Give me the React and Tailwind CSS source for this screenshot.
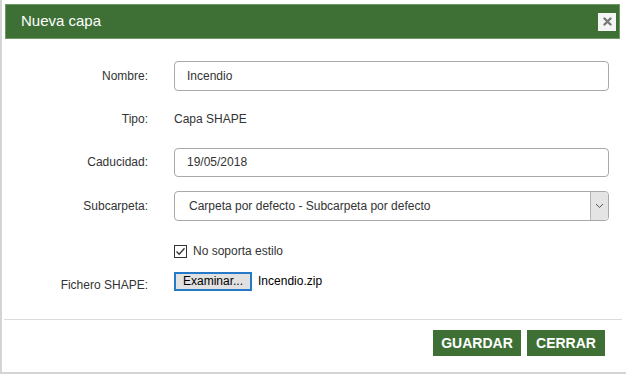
import React from 'react';

export default function App() {
  const font = { fontFamily: '"Liberation Sans", Arial, sans-serif' };

  return (
    <div className="w-[626px] h-[374px] bg-white overflow-hidden" style={font}>
      <div className="h-[374px] border-l-2 border-b-2 border-[#d4d4d4] flex flex-col">
        {/* Header */}
        <div className="mt-[4px] ml-[3px] mr-[6px] h-[35px] bg-[#3e7036] border border-[#6f9a66] flex items-center justify-between pl-[15px] pr-[3px]">
          <span className="text-white text-[15px]">Nueva capa</span>
          <button className="w-[18px] h-[18px] bg-[#f4f4f4] flex items-center justify-center">
            <svg width="9" height="9" viewBox="0 0 9 9">
              <path d="M1.5 1.5 L7.5 7.5 M7.5 1.5 L1.5 7.5" stroke="#777" strokeWidth="2.4" strokeLinecap="round" />
            </svg>
          </button>
        </div>

        {/* Form */}
        <div className="flex flex-col text-[12px] text-[#333] pl-[4px] pr-[17px]">
          <div className="flex items-center mt-[22px] h-[30px]">
            <label className="w-[142px] text-right">Nombre:</label>
            <input
              readOnly
              value="Incendio"
              className="ml-[26px] flex-1 h-[30px] border border-[#a9a9a9] rounded-[4px] px-[12px] text-[12px] text-[#333] outline-none"
              style={font}
            />
          </div>

          <div className="flex items-center mt-[13px] h-[30px]">
            <label className="w-[142px] text-right">Tipo:</label>
            <span className="ml-[26px]">Capa SHAPE</span>
          </div>

          <div className="flex items-center mt-[13px] h-[30px]">
            <label className="w-[142px] text-right">Caducidad:</label>
            <input
              readOnly
              value="19/05/2018"
              className="ml-[26px] flex-1 h-[29px] border border-[#a9a9a9] rounded-[4px] px-[12px] text-[12px] text-[#333] outline-none"
              style={font}
            />
          </div>

          <div className="flex items-center mt-[14px] h-[30px]">
            <label className="w-[142px] text-right">Subcarpeta:</label>
            <div className="ml-[26px] flex-1 h-[30px] border border-[#a9a9a9] rounded-[4px] flex items-center overflow-hidden">
              <span className="flex-1 px-[14px]">Carpeta por defecto - Subcarpeta por defecto</span>
              <div className="w-[18px] h-full bg-[#e4e4e4] border-l border-[#b5b5b5] flex items-center justify-center">
                <svg width="9" height="6" viewBox="0 0 9 6">
                  <path d="M1 1 L4.5 4.5 L8 1" stroke="#555" strokeWidth="1" fill="none" />
                </svg>
              </div>
            </div>
          </div>

          <div className="flex items-center mt-[22px] h-[16px]">
            <div className="w-[142px]" />
            <div className="ml-[26px] flex items-center">
              <span className="w-[13px] h-[13px] border border-[#333] bg-white flex items-center justify-center">
                <svg width="11" height="11" viewBox="0 0 11 11">
                  <path d="M1.5 5.5 L4.2 8.3 L9.5 2.2" stroke="#333" strokeWidth="1.3" fill="none" />
                </svg>
              </span>
              <span className="ml-[6px]">No soporta estilo</span>
            </div>
          </div>

          <div className="flex items-center mt-[9px] h-[26px]">
            <label className="w-[142px] text-right pt-[8px]">Fichero SHAPE:</label>
            <div className="ml-[26px] flex items-center">
              <button
                className="h-[19px] px-[7px] bg-[#e1e1e1] border-2 border-[#2679c6] text-[12px] text-black leading-none"
                style={font}
              >
                Examinar...
              </button>
              <span className="ml-[6px] text-black">Incendio.zip</span>
            </div>
          </div>
        </div>

        {/* Footer */}
        <div className="mt-[25px] ml-[2px] mr-[4px] border-t border-[#dcdcdc] flex justify-end gap-[6px] pt-[10px] pr-[17px]">
          <button className="w-[88px] h-[26px] bg-[#3e7036] text-white text-[14px] font-bold" style={font}>
            GUARDAR
          </button>
          <button className="w-[78px] h-[26px] bg-[#3e7036] text-white text-[14px] font-bold" style={font}>
            CERRAR
          </button>
        </div>
      </div>
    </div>
  );
}
